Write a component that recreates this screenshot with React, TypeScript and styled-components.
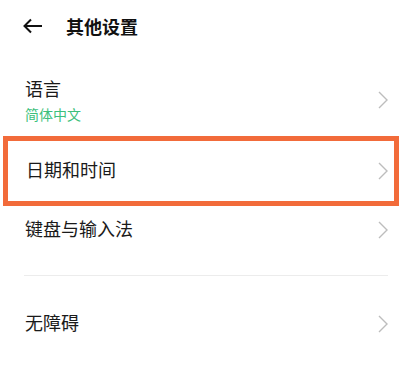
import React from "react";
import styled, { createGlobalStyle } from "styled-components";

const GlobalStyle = createGlobalStyle`
	body {
		margin: 0;
		background: #ffffff;
		font-family: "Noto Sans CJK SC", "Noto Sans", sans-serif;
		color: #1a1a1a;
	}
`;

const Page = styled.div`
	width: 400px;
	height: 369px;
	overflow: hidden;
	background: #ffffff;
`;

const Header = styled.header`
	height: 52px;
	display: flex;
	align-items: center;
	padding-left: 23px;
	gap: 23px;
`;

const Title = styled.h1`
	margin: 0;
	font-size: 18px;
	font-weight: 700;
	line-height: 1;
	color: #111111;
`;

const List = styled.ul`
	list-style: none;
	margin: 0;
	padding: 12px 0 0;
`;

const Row = styled.li<{ $height: number; $active?: boolean }>`
	height: ${(p) => p.$height}px;
	display: flex;
	align-items: center;
	justify-content: space-between;
	box-sizing: border-box;
	padding: 0 12px 0 25px;
	${(p) =>
		p.$active &&
		`
		margin: 0 1px 0 3px;
		border: 5px solid #f26b3a;
		padding: 0 6px 0 18px;
	`}
`;

const Texts = styled.div`
	display: flex;
	flex-direction: column;
	gap: 10px;
`;

const Label = styled.span<{ $single?: boolean }>`
	font-size: 18px;
	line-height: 1;
	color: #1a1a1a;
	padding-bottom: ${(p) => (p.$single ? 5 : 0)}px;
`;

const Sub = styled.span`
	font-size: 14px;
	line-height: 1;
	color: #3cbf7c;
`;

const Divider = styled.li`
	height: 1px;
	margin: 21px 12px 0 24px;
	background: #ececec;
`;

const Chevron = () => (
	<svg width="10" height="18" viewBox="0 0 10 18" fill="none">
		<polyline points="1,1 9,9 1,17" stroke="#bdbdbd" strokeWidth="1.4" />
	</svg>
);

const BackArrow = () => (
	<svg width="20" height="16" viewBox="0 0 20 16" fill="none">
		<line x1="1.5" y1="8" x2="19" y2="8" stroke="#111" strokeWidth="2" />
		<polyline points="8,1.5 1.5,8 8,14.5" stroke="#111" strokeWidth="2" />
	</svg>
);

const App = () => {
	return (
		<Page>
			<GlobalStyle />
			<Header>
				<BackArrow />
				<Title>其他设置</Title>
			</Header>
			<List>
				<Row $height={72}>
					<Texts>
						<Label>语言</Label>
						<Sub>简体中文</Sub>
					</Texts>
					<Chevron />
				</Row>
				<Row $height={70} $active>
					<Label $single>日期和时间</Label>
					<Chevron />
				</Row>
				<Row $height={48}>
					<Label $single>键盘与输入法</Label>
					<Chevron />
				</Row>
				<Divider />
				<Row $height={96}>
					<Label $single>无障碍</Label>
					<Chevron />
				</Row>
			</List>
		</Page>
	);
};

export default App;
